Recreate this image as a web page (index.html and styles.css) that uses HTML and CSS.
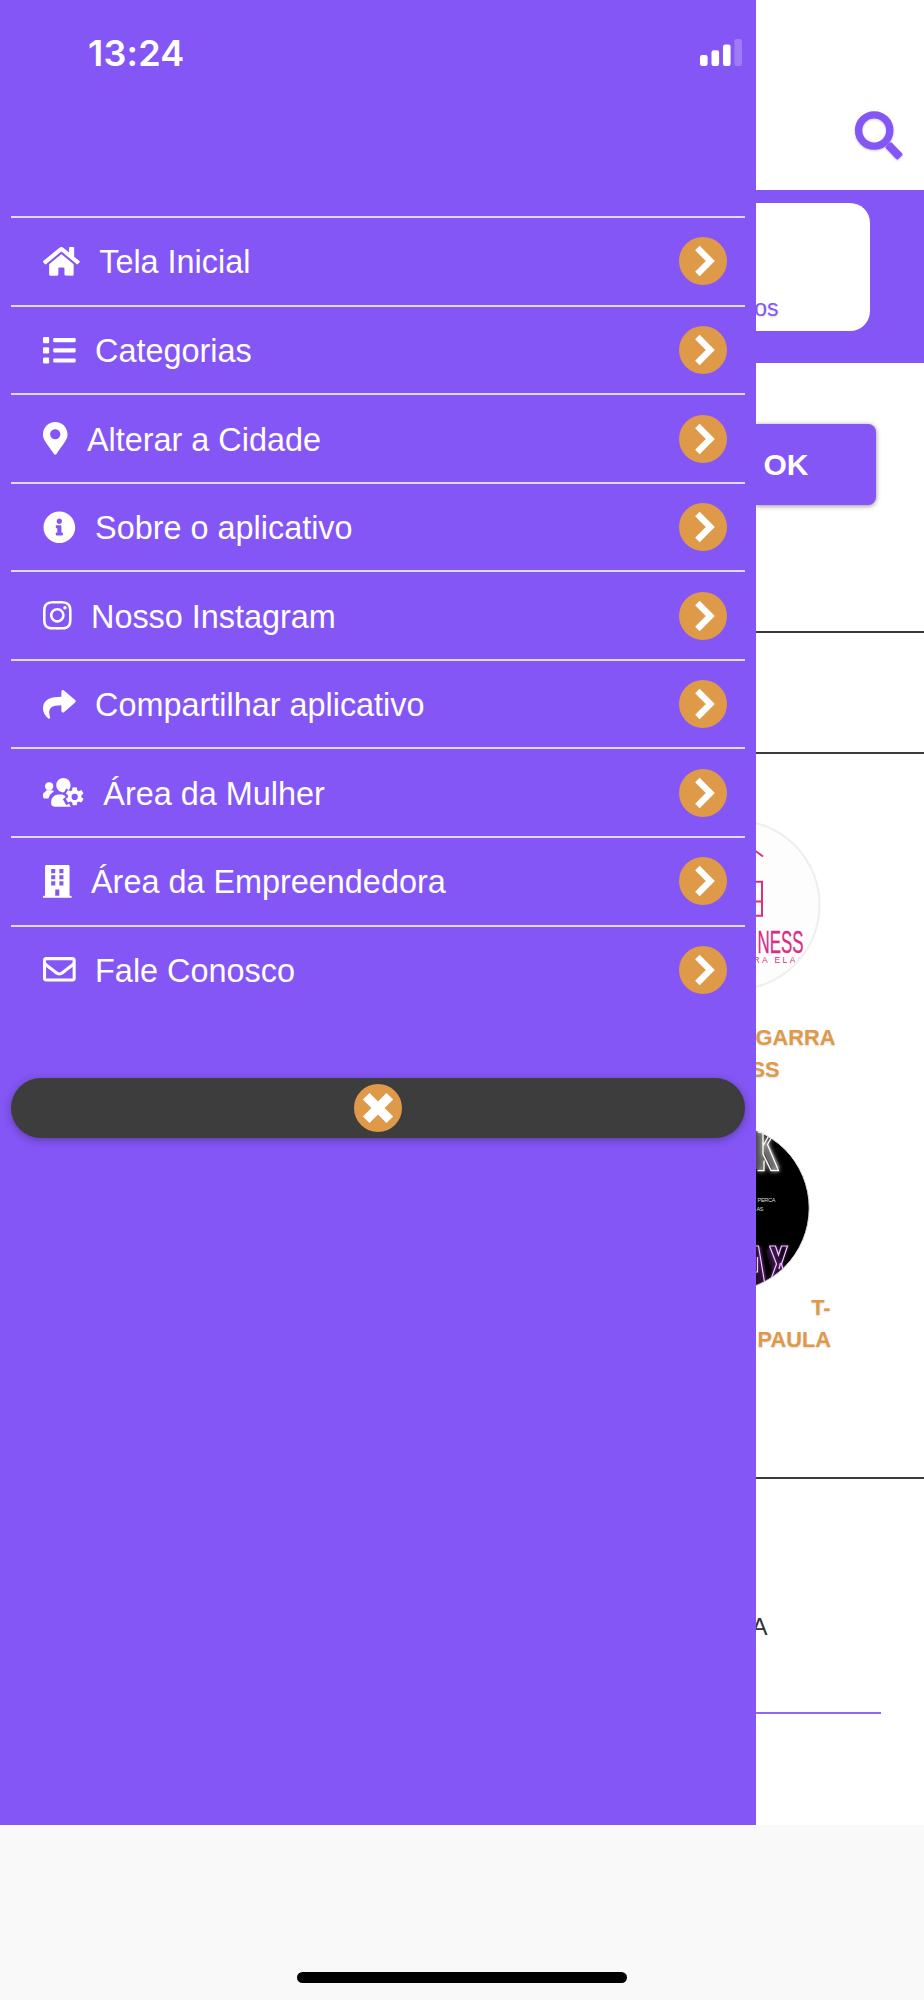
FILE: index.html
```html
<!DOCTYPE html>
<html lang="pt-BR">
<head>
<meta charset="utf-8">
<title>Menu</title>
<link rel="stylesheet" href="styles.css">
</head>
<body>
<svg class="defs" aria-hidden="true">
  <symbol id="go" viewBox="0 0 48 48"><circle cx="24" cy="24" r="24" fill="#de9a49"/><path d="M18.4 11 31.3 24 18.4 37" fill="none" stroke="#fff" stroke-width="6.4"/></symbol>
</svg>
<div class="screen">
  <nav class="drawer">
    <div class="status">
      <span class="time">13:24</span>
      <svg class="signal" viewBox="0 0 42 27"><g fill="#fff"><rect y="16" width="7.6" height="11" rx="2.2"/><rect x="11.5" y="11.2" width="7.6" height="15.8" rx="2.2"/><rect x="23" y="5.5" width="7.6" height="21.5" rx="2.2"/><rect x="34.4" width="7.6" height="27" rx="2.2" opacity=".22"/></g></svg>
    </div>
    <ul class="menu">
      <li class="item"><svg class="icon w576" viewBox="0 0 576 512"><path d="M280.37 148.26L96 300.11V464a16 16 0 0 0 16 16l112.06-.29a16 16 0 0 0 15.92-16V368a16 16 0 0 1 16-16h64a16 16 0 0 1 16 16v95.64a16 16 0 0 0 16 16.05L464 480a16 16 0 0 0 16-16V300L295.67 148.26a12.19 12.19 0 0 0-15.3 0zM571.6 251.47L488 182.56V44.05a12 12 0 0 0-12-12h-56a12 12 0 0 0-12 12v72.61L318.47 43a48 48 0 0 0-61 0L4.34 251.47a12 12 0 0 0-1.6 16.9l25.5 31A12 12 0 0 0 45.15 301l235.22-193.74a12.19 12.19 0 0 1 15.3 0L530.9 301a12 12 0 0 0 16.9-1.6l25.5-31a12 12 0 0 0-1.7-16.93z"/></svg><span class="label">Tela Inicial</span><svg class="go"><use href="#go"/></svg></li>
      <li class="item"><svg class="icon w512" viewBox="0 0 512 512"><path d="M80 368H16a16 16 0 0 0-16 16v64a16 16 0 0 0 16 16h64a16 16 0 0 0 16-16v-64a16 16 0 0 0-16-16zm0-320H16A16 16 0 0 0 0 64v64a16 16 0 0 0 16 16h64a16 16 0 0 0 16-16V64a16 16 0 0 0-16-16zm0 160H16a16 16 0 0 0-16 16v64a16 16 0 0 0 16 16h64a16 16 0 0 0 16-16v-64a16 16 0 0 0-16-16zm416 176H176a16 16 0 0 0-16 16v32a16 16 0 0 0 16 16h320a16 16 0 0 0 16-16v-32a16 16 0 0 0-16-16zm0-320H176a16 16 0 0 0-16 16v32a16 16 0 0 0 16 16h320a16 16 0 0 0 16-16V80a16 16 0 0 0-16-16zm0 160H176a16 16 0 0 0-16 16v32a16 16 0 0 0 16 16h320a16 16 0 0 0 16-16v-32a16 16 0 0 0-16-16z"/></svg><span class="label">Categorias</span><svg class="go"><use href="#go"/></svg></li>
      <li class="item"><svg class="icon w384" viewBox="0 0 384 512"><path d="M172.268 501.67C26.97 291.031 0 269.413 0 192 0 85.961 85.961 0 192 0s192 85.961 192 192c0 77.413-26.97 99.031-172.268 309.67-9.535 13.774-29.93 13.773-39.464 0zM192 272c44.183 0 80-35.817 80-80s-35.817-80-80-80-80 35.817-80 80 35.817 80 80 80z"/></svg><span class="label">Alterar a Cidade</span><svg class="go"><use href="#go"/></svg></li>
      <li class="item"><svg class="icon w512" viewBox="0 0 512 512"><path d="M256 8C119.043 8 8 119.083 8 256c0 136.997 111.043 248 248 248s248-111.003 248-248C504 119.083 392.957 8 256 8zm0 110c23.196 0 42 18.804 42 42s-18.804 42-42 42-42-18.804-42-42 18.804-42 42-42zm56 254c0 6.627-5.373 12-12 12h-88c-6.627 0-12-5.373-12-12v-24c0-6.627 5.373-12 12-12h12v-64h-12c-6.627 0-12-5.373-12-12v-24c0-6.627 5.373-12 12-12h64c6.627 0 12 5.373 12 12v100h12c6.627 0 12 5.373 12 12v24z"/></svg><span class="label">Sobre o aplicativo</span><svg class="go"><use href="#go"/></svg></li>
      <li class="item"><svg class="icon w448" viewBox="0 0 448 512"><path d="M224.1 141c-63.6 0-114.9 51.3-114.9 114.9s51.3 114.9 114.9 114.9S339 319.5 339 255.9 287.7 141 224.1 141zm0 189.6c-41.1 0-74.7-33.5-74.7-74.7s33.5-74.7 74.7-74.7 74.7 33.5 74.7 74.7-33.6 74.7-74.7 74.7zm146.4-194.3c0 14.9-12 26.8-26.8 26.8-14.9 0-26.8-12-26.8-26.8s12-26.8 26.8-26.8 26.8 12 26.8 26.8zm76.1 27.2c-1.7-35.9-9.9-67.7-36.2-93.9-26.2-26.2-58-34.4-93.9-36.2-37-2.1-147.9-2.1-184.9 0-35.8 1.7-67.6 9.9-93.9 36.1s-34.4 58-36.2 93.9c-2.1 37-2.1 147.9 0 184.9 1.7 35.9 9.9 67.7 36.2 93.9s58 34.4 93.9 36.2c37 2.1 147.9 2.1 184.9 0 35.9-1.7 67.7-9.9 93.9-36.2 26.2-26.2 34.4-58 36.2-93.9 2.1-37 2.1-147.8 0-184.8zM398.8 388c-7.8 19.6-22.9 34.7-42.6 42.6-29.5 11.7-99.5 9-132.1 9s-102.7 2.6-132.1-9c-19.6-7.8-34.7-22.9-42.6-42.6-11.7-29.5-9-99.5-9-132.1s-2.6-102.7 9-132.1c7.8-19.6 22.9-34.7 42.6-42.6 29.5-11.7 99.5-9 132.1-9s102.7-2.6 132.1 9c19.6 7.8 34.7 22.9 42.6 42.6 11.7 29.5 9 99.5 9 132.1s2.7 102.7-9 132.1z"/></svg><span class="label">Nosso Instagram</span><svg class="go"><use href="#go"/></svg></li>
      <li class="item"><svg class="icon w512" viewBox="0 0 512 512"><path d="M503.691 189.836L327.687 37.851C312.281 24.546 288 35.347 288 56.015v80.053C127.371 137.907 0 170.1 0 322.326c0 61.441 39.581 122.309 83.333 154.132 13.653 9.931 33.111-2.533 28.077-18.631C66.066 312.814 132.917 274.316 288 272.085V360c0 20.7 24.3 31.453 39.687 18.164l176.004-152c11.071-9.562 11.086-26.753 0-36.328z"/></svg><span class="label">Compartilhar aplicativo</span><svg class="go"><use href="#go"/></svg></li>
      <li class="item"><svg class="icon w640" viewBox="0 0 640 512"><circle cx="96" cy="160" r="64"/><path d="M32 256Q38 224 64 224h64c17 0 34 7 45 19-56 27-80 75-87 109H32c-18 0-32-14-32-32v-32c0-18 14-32 32-32z"/><path d="M320 256c62 0 112-50 112-112S382 32 320 32 208 82 208 144s50 112 112 112zm-77 32c-64 0-115 51-115 115v29c0 26 22 48 48 48h264c-15-7-25-20-25-36v-15l-13-8c-27 13-46-2-60-26-17-29-16-43 10-66v-16c-18-18-14-25-27-25z"/><path class="cut" d="M456 144h74v54l14 8 47-27 55 95-47 27v16l47 27-55 95-47-27-14 8v60h-74l-31-42-14-8-47 27-55-95 47-27v-16l-47-27 55-95 47 27 14-8z"/><path fill-rule="evenodd" d="M462 181q34-8 68 0l5 42q14 5 26 15l38-17q24 25 34 57l-33 25q3 15 0 30l33 25q-10 32-34 57l-38-17q-12 10-26 15l-5 42q-34 8-68 0l-5-42q-14-5-26-15l-38 17q-24-25-34-57l33-25q-3-15 0-30l-33-25q10-32 34-57l38 17q12-10 26-15zm34 98a49 49 0 1 0 0 98 49 49 0 1 0 0-98z"/></svg><span class="label">Área da Mulher</span><svg class="go"><use href="#go"/></svg></li>
      <li class="item"><svg class="icon w448" viewBox="0 0 448 512"><path fill-rule="evenodd" d="M436 480h-20V24c0-13-11-24-24-24H56C43 0 32 11 32 24v456H12c-7 0-12 5-12 12v20h448v-20c0-7-5-12-12-12zM128 64h64v64h-64zM256 64h64v64h-64zM128 160h64v64h-64zM256 160h64v64h-64zM128 256h64v64h-64zM256 256h64v64h-64zM192 384h64v96h-64z"/></svg><span class="label">Área da Empreendedora</span><svg class="go"><use href="#go"/></svg></li>
      <li class="item"><svg class="icon w512" viewBox="0 0 512 512"><path d="M464 64H48C21.49 64 0 85.49 0 112v288c0 26.51 21.49 48 48 48h416c26.51 0 48-21.49 48-48V112c0-26.51-21.49-48-48-48zm0 48v40.805c-22.422 18.259-58.168 46.651-134.587 106.49-16.841 13.247-50.201 45.072-73.413 44.701-23.208.375-56.579-31.459-73.413-44.701C106.18 199.465 70.425 171.067 48 152.805V112h416zM48 400V214.398c22.914 18.251 55.409 43.862 104.938 82.646 21.857 17.205 60.134 55.186 103.062 54.955 42.717.231 80.509-37.199 103.053-54.947 49.528-38.783 82.032-64.401 104.947-82.653V400H48z"/></svg><span class="label">Fale Conosco</span><svg class="go"><use href="#go"/></svg></li>
    </ul>
    <button class="close" aria-label="Fechar"><svg class="close-icon" viewBox="0 0 48 48"><circle cx="24" cy="24" r="24" fill="#de9a49"/><path d="M12.2 12.2 35.8 35.8M35.8 12.2 12.2 35.8" stroke="#fff" stroke-width="9.4"/></svg></button>
  </nav>

  <main class="page">
    <header class="topbar">
      <svg class="search" viewBox="0 0 50 50"><circle cx="20.2" cy="20.5" r="15.6" fill="none" stroke="#8456f5" stroke-width="7.4"/><rect x="31" y="36.700" width="18" height="8.200" rx="2" transform="rotate(46 40 40.8)" fill="#8456f5"/></svg>
    </header>
    <section class="band"><div class="card">os</div></section>
    <section class="city"><button class="ok">OK</button></section>
    <div class="strip"></div>
    <section class="shops">
      <svg class="logo logo-fit" viewBox="755.5 820 168.5 170">
        <clipPath id="ring"><circle cx="734.5" cy="905" r="83"/></clipPath>
        <circle cx="734.5" cy="905" r="84.5" fill="#fdfdfd" stroke="#eee" stroke-width="2"/>
        <g fill="none" stroke="#d92d86" stroke-width="2"><path d="M755 851l7.5 5.5M750 881.8h11.5v34H750M750 901.5h11.5"/></g>
        <g class="pink" clip-path="url(#ring)"><text class="brand" x="757" y="952.5" font-size="32" textLength="46" lengthAdjust="spacingAndGlyphs">NESS</text>
        <text x="753" y="963" font-size="8.5" textLength="50">RA ELAS</text></g>
      </svg>
      <p class="name first">GARRA</p>
      <p class="name second">SS</p>
      <svg class="logo logo-neon" viewBox="755.5 1123 168.5 168">
        <clipPath id="disc"><circle cx="725.7" cy="1207" r="83"/></clipPath>
        <circle cx="725.7" cy="1207" r="83" stroke="#ddd" stroke-width="1"/>
        <g clip-path="url(#disc)">
          <g fill="none" stroke="#fff" class="white-glow"><path stroke-width="8" opacity=".2" d="M759 1128v40M764 1142l12 26"/><path stroke-width="1.3" d="M757 1169.5h6.500v-10M757.500 1131h5v22l8 16.500h7.500l-11-26 9-16M763 1144l8-14"/></g>
          <text x="757" y="1201" font-size="5.5" fill="#ddd" textLength="18">PERCA</text>
          <text x="756" y="1210" font-size="5.5" fill="#ddd" textLength="7">AS</text>
          <g fill="none" stroke="#f1c9ff" class="violet-glow"><path stroke-width="12" opacity=".13" stroke="#b044d8" d="M755 1247l7 40M771 1247l12 40"/><path stroke-width="1.2" d="M750 1245h8l7 42M757 1256v15h-4M769 1245h6l3 9 3-9h6l-6 18 6 22M769 1245l7 18-8 22M780 1262l-1.5 6"/></g>
        </g>
      </svg>
      <p class="name third">T-</p>
      <p class="name fourth">PAULA</p>
    </section>
    <section class="field"><div class="line"><span class="value">A</span></div></section>
  </main>
  <footer class="bottom"><div class="home"></div></footer>
</div>
</body>
</html>
```
FILE: styles.css
```css
* { box-sizing: border-box; }
body { margin: 0; font-family: "Liberation Sans", Arial, sans-serif; }
.defs { display: none; }
.screen {
  display: grid;
  grid-template-columns: 755.5px 168.5px;
  grid-template-rows: 1825px 175px;
  width: 924px;
  height: 2000px;
  overflow: hidden;
  background: #fff;
}
.drawer { background: #8456f5; padding: 0 10.5px 0 11px; }
.status {
  height: 216.2px;
  padding: 39px 3px 0 77px;
  display: flex;
  justify-content: space-between;
  align-items: flex-start;
}
.time {
  font: 600 36px/28px Inter, sans-serif;
  letter-spacing: .2px;
  color: #fff;
}
.signal { width: 42px; height: 27px; }
.menu { list-style: none; margin: 0; padding: 0; }
.item {
  height: 88.55px;
  border-top: 2px solid #dedce6;
  padding: 0 18px 0 32.4px;
  display: flex;
  align-items: center;
  color: #fff;
}
.icon { height: 32.7px; fill: #fff; flex: none; margin-right: 19px; }
.w384 { width: 24.5px; }
.w448 { width: 28.6px; }
.w512 { width: 32.7px; }
.w576 { width: 36.8px; }
.w640 { width: 40.9px; }
.cut { fill: #8456f5; }
.label { flex: 1; font-size: 32.4px; line-height: 38px; padding-top: 2px; white-space: nowrap; }
.go { width: 48px; height: 48px; flex: none; }
.close {
  display: flex;
  align-items: center;
  justify-content: center;
  width: 734px;
  height: 60px;
  margin: 64.6px 0 0;
  padding: 0;
  border: 0;
  border-radius: 30px;
  background: #3d3d3d;
  box-shadow: 0 2px 8px rgba(0, 0, 0, .3);
}
.close-icon { width: 48px; height: 48px; }

.page { overflow: hidden; background: #fff; }
.topbar { height: 190px; padding: 110px 20px 0 0; display: flex; justify-content: flex-end; }
.search { width: 50px; height: 50px; filter: drop-shadow(0 1px 1px rgba(0, 0, 0, .2)); }
.band { height: 172.5px; background: #8456f5; padding-top: 13px; }
.card {
  width: 114.5px;
  height: 128px;
  border-radius: 0 20px 20px 0;
  background: #fff;
  color: #8456f5;
  font-size: 23px;
  line-height: 26px;
  padding: 92px 91.5px 0 0;
  display: flex;
  justify-content: flex-end;
  text-shadow: 0 1px 2px rgba(0, 0, 0, .15);
}
.city { height: 268px; padding-top: 61px; }
.ok {
  display: block;
  width: 120.5px;
  height: 81.5px;
  padding: 1px 0 0 8px;
  border: 0;
  border-radius: 0 8px 8px 0;
  background: #8456f5;
  box-shadow: 0 1px 5px rgba(0, 0, 0, .45);
  color: #fff;
  font: bold 30px/36px "Liberation Sans", Arial, sans-serif;
  text-align: left;
}
.strip { height: 121px; border-top: 2px solid #3a3a3a; }
.shops {
  height: 725.5px;
  border-top: 2px solid #3a3a3a;
  padding-top: 66.5px;
}
.logo { display: block; width: 168.5px; }
.logo-fit { height: 170px; }
.logo-neon { height: 168px; margin-top: 37.5px; }
.pink { fill: #d92d86; font-family: "Liberation Sans", sans-serif; }
.brand { stroke: #d92d86; stroke-width: .3px; }
.white-glow { filter: drop-shadow(0 0 2px #fff); }
.violet-glow { filter: drop-shadow(0 0 1.5px #8a34aa); }
.name {
  margin: 0;
  color: #de9a49;
  font-weight: bold;
  font-size: 21.8px;
  line-height: 32.3px;
  text-align: right;
  text-shadow: 0 1px 2px rgba(0, 0, 0, .15);
  white-space: nowrap;
}
.first { padding-right: 90px; margin-top: 31.5px; }
.second { padding-right: 144.5px; margin-left: -20px; }
.third { padding-right: 93.5px; }
.fourth { padding-right: 93px; }
.field { border-top: 2px solid #3a3a3a; }
.line {
  width: 125.5px;
  height: 235px;
  border-bottom: 2px solid #9067f2;
  padding-top: 134px;
}
.value {
  display: block;
  margin-left: -4px;
  font-size: 24px;
  line-height: 28px;
  color: #333;
}
.bottom {
  grid-column: 1 / 3;
  background: #f9f9f9;
  display: flex;
  justify-content: center;
  align-items: flex-start;
  padding-top: 146.5px;
}
.home { width: 330.5px; height: 11.5px; border-radius: 6px; background: #000; }
```
